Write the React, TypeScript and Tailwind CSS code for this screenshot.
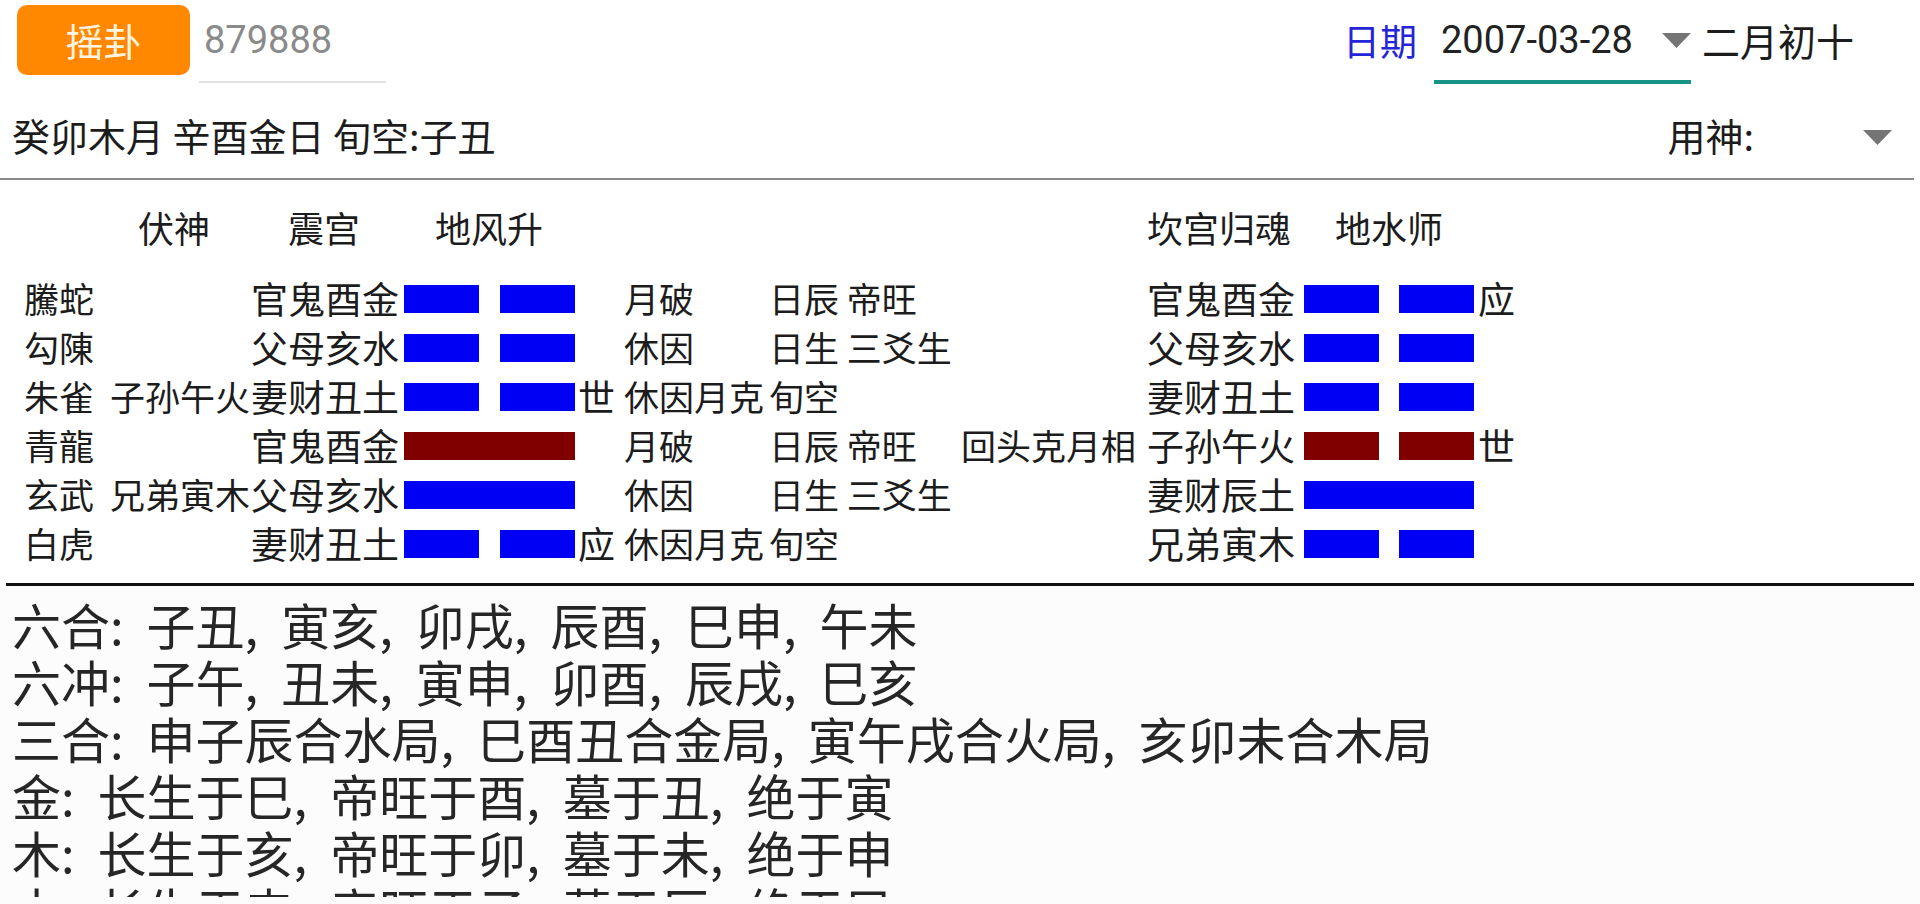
import React from "react";

type Line = { kind: "yin" | "yang"; color: "blue" | "red" };

type Row = {
  god: string;
  hidden: string;
  name: string;
  line: Line;
  mark: string;
  status: string;
  extra: string;
  change: string;
  rname: string;
  rline: Line;
  rmark: string;
};

const rows: Row[] = [
  { god: "騰蛇", hidden: "", name: "官鬼酉金", line: { kind: "yin", color: "blue" }, mark: "", status: "月破", extra: "日辰 帝旺", change: "", rname: "官鬼酉金", rline: { kind: "yin", color: "blue" }, rmark: "应" },
  { god: "勾陳", hidden: "", name: "父母亥水", line: { kind: "yin", color: "blue" }, mark: "", status: "休因", extra: "日生 三爻生", change: "", rname: "父母亥水", rline: { kind: "yin", color: "blue" }, rmark: "" },
  { god: "朱雀", hidden: "子孙午火", name: "妻财丑土", line: { kind: "yin", color: "blue" }, mark: "世", status: "休因月克", extra: "旬空", change: "", rname: "妻财丑土", rline: { kind: "yin", color: "blue" }, rmark: "" },
  { god: "青龍", hidden: "", name: "官鬼酉金", line: { kind: "yang", color: "red" }, mark: "", status: "月破", extra: "日辰 帝旺", change: "回头克月相", rname: "子孙午火", rline: { kind: "yin", color: "red" }, rmark: "世" },
  { god: "玄武", hidden: "兄弟寅木", name: "父母亥水", line: { kind: "yang", color: "blue" }, mark: "", status: "休因", extra: "日生 三爻生", change: "", rname: "妻财辰土", rline: { kind: "yang", color: "blue" }, rmark: "" },
  { god: "白虎", hidden: "", name: "妻财丑土", line: { kind: "yin", color: "blue" }, mark: "应", status: "休因月克", extra: "旬空", change: "", rname: "兄弟寅木", rline: { kind: "yin", color: "blue" }, rmark: "" },
];

const notes = [
  "六合: 子丑, 寅亥, 卯戌, 辰酉, 巳申, 午未",
  "六冲: 子午, 丑未, 寅申, 卯酉, 辰戌, 巳亥",
  "三合: 申子辰合水局, 巳酉丑合金局, 寅午戌合火局, 亥卯未合木局",
  "金: 长生于巳, 帝旺于酉, 墓于丑, 绝于寅",
  "木: 长生于亥, 帝旺于卯, 墓于未, 绝于申",
  "水: 长生于申, 帝旺于子, 墓于辰, 绝于巳",
];

function Caret() {
  return (
    <svg width="29" height="15" viewBox="0 0 29 15" className="block">
      <polygon points="0,0 29,0 14.5,15" fill="#757575" />
    </svg>
  );
}

function Yao({ line, width }: { line: Line; width: string }) {
  const bg = line.color === "red" ? "bg-[#800000]" : "bg-[#0000f5]";
  if (line.kind === "yang") {
    return <div className={`${width} h-[28px] ${bg}`} />;
  }
  return (
    <div className={`${width} h-[28px] flex justify-between`}>
      <div className={`w-[75px] h-full ${bg}`} />
      <div className={`w-[75px] h-full ${bg}`} />
    </div>
  );
}

export default function App() {
  return (
    <div
      className="w-[1920px] h-[904px] overflow-hidden bg-[#fcfcfc] text-[#1c1c1c]"
      style={{ fontFamily: '"Noto Sans CJK SC", sans-serif' }}
    >
      <div className="bg-white">
        {/* Top bar */}
        <div className="flex h-[90px]">
          <button className="ml-[17px] mt-[5px] w-[173px] h-[70px] rounded-[10px] bg-[#ff8800] text-[#fff4e2] text-[38px] leading-[70px]">
            摇卦
          </button>
          <div
            className="ml-[9px] mt-[5px] w-[187px] h-[78px] border-b-2 border-[#e2e2e2] pl-[5px] text-[38px] leading-[70px] text-[#8a8a8a]"
            style={{ fontFamily: 'Roboto, "Noto Sans CJK SC", sans-serif' }}
          >
            879888
          </div>
          <div className="flex-1" />
          <div className="mt-[5px] text-[37px] leading-[70px] text-[#2424d8]">日期</div>
          <div className="ml-[17px] mt-[5px] w-[257px] h-[79px] border-b-4 border-[#179485] flex">
            <span
              className="pl-[7px] text-[38px] leading-[70px] text-[#222]"
              style={{ fontFamily: 'Roboto, "Noto Sans CJK SC", sans-serif' }}
            >
              2007-03-28
            </span>
            <span className="ml-auto mt-[28px]">
              <Caret />
            </span>
          </div>
          <div className="ml-[11px] mr-[66px] mt-[5px] text-[38px] leading-[70px]">二月初十</div>
        </div>

        {/* Date info row */}
        <div className="flex items-center h-[88px]">
          <div className="pl-[12px] text-[38px]">癸卯木月 辛酉金日 旬空:子丑</div>
          <div className="flex-1" />
          <div className="text-[38px]">用神:</div>
          <div className="ml-[109px] mr-[28px] mt-[6px]">
            <Caret />
          </div>
        </div>
        <div className="h-[2px] bg-[#8a8a8a] mr-[6px]" />

        {/* Hexagram table */}
        <div className="text-[36px] pb-[15px]">
          <div className="flex pt-[22px] h-[72px] leading-[50px] pl-[138px]">
            <div className="w-[150px]">伏神</div>
            <div className="w-[147px]">震宫</div>
            <div className="w-[712px]">地风升</div>
            <div className="w-[188px]">坎宫归魂</div>
            <div>地水师</div>
          </div>
          <div className="mt-[22px]">
            {rows.map((r, i) => (
              <div key={i} className="flex items-center h-[49px] pl-[24px] whitespace-nowrap">
                <div className="w-[86px] text-[35px]">{r.god}</div>
                <div className="w-[141px] text-[35px]">{r.hidden}</div>
                <div className="w-[153px] text-[37px]">{r.name}</div>
                <Yao line={r.line} width="w-[171px]" />
                <div className="w-[49px] pl-[3px] text-[37px]">{r.mark}</div>
                <div className="w-[145px] text-[35px]">{r.status}</div>
                <div className="w-[192px] text-[35px]">{r.extra}</div>
                <div className="w-[186px] text-[35px]">{r.change}</div>
                <div className="w-[157px] text-[37px]">{r.rname}</div>
                <Yao line={r.rline} width="w-[170px]" />
                <div className="pl-[4px] text-[37px]">{r.rmark}</div>
              </div>
            ))}
          </div>
        </div>
        <div className="h-[3px] bg-[#111] ml-[6px] mr-[6px]" />
      </div>

      {/* Notes */}
      <div className="h-[311px] overflow-hidden pt-[9px] pl-[12px] text-[49px] leading-[57px] text-[#262626] [word-spacing:12px] whitespace-nowrap">
        {notes.map((n, i) => (
          <div key={i}>{n}</div>
        ))}
      </div>
    </div>
  );
}
